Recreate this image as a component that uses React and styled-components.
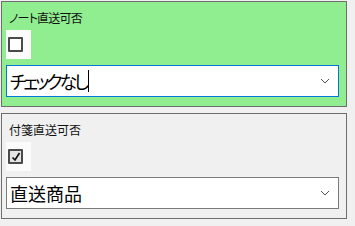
import React from "react";
import styled, { createGlobalStyle } from "styled-components";

const GlobalStyle = createGlobalStyle`
  body {
    margin: 0;
    background: #f0f0f0;
    font-family: "Noto Sans CJK JP", "Noto Sans", sans-serif;
  }
`;

const Page = styled.div`
  display: flex;
  flex-direction: column;
  gap: 6px;
  padding: 1px;
  width: 346px;
`;

const Panel = styled.div`
  display: flex;
  flex-direction: column;
  border: 1px solid #6e6e6e;
  background: ${(props) => props.bg};
  padding: 8px 7px 9px 4px;
`;

const Label = styled.div`
  font-size: 12px;
  line-height: 16px;
  color: #111;
  padding-left: 3px;
  font-feature-settings: "palt";
  letter-spacing: ${(props) => props.spacing || "0"};
`;

const CheckWrap = styled.div`
  width: 25px;
  height: 29px;
  margin-top: 4px;
  background: #fbfbfb;
  display: flex;
  align-items: center;
  padding-left: 2px;
  box-sizing: border-box;
`;

const Box = styled.div`
  width: 11px;
  height: 11px;
  border: 2px solid #4a4a4a;
  border-radius: 1px;
  background: ${(props) => (props.checked ? "#e4e4e4" : "#fff")};
  display: flex;
  align-items: center;
  justify-content: center;
`;

const Select = styled.div`
  margin-top: 6px;
  height: 32px;
  box-sizing: border-box;
  border: 1px solid ${(props) => (props.focused ? "#0078d7" : "#7a7a7a")};
  background: #fff;
  display: flex;
  align-items: center;
  padding: 0 8px 0 3px;
  font-size: 18px;
  color: #000;
  font-feature-settings: "palt";
`;

const Value = styled.span`
  flex: 1;
  display: flex;
  align-items: center;
  letter-spacing: ${(props) => props.spacing || "0"};
`;

const Caret = styled.span`
  display: inline-block;
  width: 1px;
  height: 22px;
  background: #000;
  margin-left: 2px;
`;

const Check = ({ checked }) => (
  <CheckWrap>
    <Box checked={checked}>
      {checked && (
        <svg width="10" height="10" viewBox="0 0 10 10">
          <path d="M1.5 5.5 L4 8 L8.5 1" fill="none" stroke="#111" strokeWidth="1.7" />
        </svg>
      )}
    </Box>
  </CheckWrap>
);

const Chevron = () => (
  <svg width="10" height="6" viewBox="0 0 10 6">
    <path d="M1 1 L5 5 L9 1" fill="none" stroke="#555" strokeWidth="1" />
  </svg>
);

export default function App() {
  return (
    <>
      <GlobalStyle />
      <Page>
        <Panel bg="#90ee90">
          <Label spacing="-0.8px">ノート直送可否</Label>
          <Check />
          <Select focused>
            <Value spacing="-3px">
              チェックなし
              <Caret />
            </Value>
            <Chevron />
          </Select>
        </Panel>
        <Panel bg="#f0f0f0">
          <Label>付箋直送可否</Label>
          <Check checked />
          <Select>
            <Value>直送商品</Value>
            <Chevron />
          </Select>
        </Panel>
      </Page>
    </>
  );
}
